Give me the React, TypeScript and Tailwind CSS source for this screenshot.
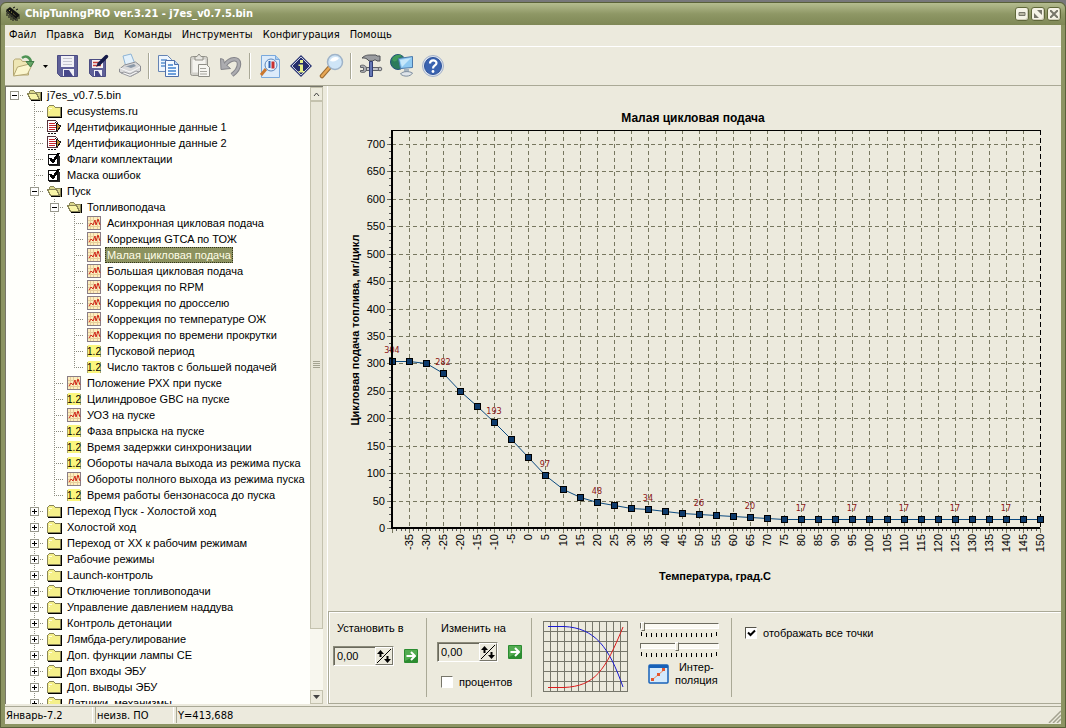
import React, { useState } from 'react';

type IconKind = 'open' | 'folder' | 'ident' | 'flags' | 'graph' | 'value';

interface TreeItem {
  label: string;
  level: number;
  icon: IconKind;
  box?: 'plus' | 'minus';
  last?: boolean;
}

const tree: TreeItem[] = [
  { label: 'j7es_v0.7.5.bin', level: 0, icon: 'open', box: 'minus' },
  { label: 'ecusystems.ru', level: 1, icon: 'folder' },
  { label: 'Идентификационные данные 1', level: 1, icon: 'ident' },
  { label: 'Идентификационные данные 2', level: 1, icon: 'ident' },
  { label: 'Флаги комплектации', level: 1, icon: 'flags' },
  { label: 'Маска ошибок', level: 1, icon: 'flags' },
  { label: 'Пуск', level: 1, icon: 'open', box: 'minus' },
  { label: 'Топливоподача', level: 2, icon: 'open', box: 'minus' },
  { label: 'Асинхронная цикловая подача', level: 3, icon: 'graph' },
  { label: 'Коррекция GTCA по ТОЖ', level: 3, icon: 'graph' },
  { label: 'Малая цикловая подача', level: 3, icon: 'graph' },
  { label: 'Большая цикловая подача', level: 3, icon: 'graph' },
  { label: 'Коррекция по RPM', level: 3, icon: 'graph' },
  { label: 'Коррекция по дросселю', level: 3, icon: 'graph' },
  { label: 'Коррекция по температуре ОЖ', level: 3, icon: 'graph' },
  { label: 'Коррекция по времени прокрутки', level: 3, icon: 'graph' },
  { label: 'Пусковой период', level: 3, icon: 'value' },
  { label: 'Число тактов с большей подачей', level: 3, icon: 'value', last: true },
  { label: 'Положение РХХ при пуске', level: 2, icon: 'graph' },
  { label: 'Цилиндровое GBC на пуске', level: 2, icon: 'value' },
  { label: 'УОЗ на пуске', level: 2, icon: 'graph' },
  { label: 'Фаза впрыска на пуске', level: 2, icon: 'value' },
  { label: 'Время задержки синхронизации', level: 2, icon: 'value' },
  { label: 'Обороты начала выхода из режима пуска', level: 2, icon: 'value' },
  { label: 'Обороты полного выхода из режима пуска', level: 2, icon: 'graph' },
  { label: 'Время работы бензонасоса до пуска', level: 2, icon: 'value', last: true },
  { label: 'Переход Пуск - Холостой ход', level: 1, icon: 'folder', box: 'plus' },
  { label: 'Холостой ход', level: 1, icon: 'folder', box: 'plus' },
  { label: 'Переход от ХХ к рабочим режимам', level: 1, icon: 'folder', box: 'plus' },
  { label: 'Рабочие режимы', level: 1, icon: 'folder', box: 'plus' },
  { label: 'Launch-контроль', level: 1, icon: 'folder', box: 'plus' },
  { label: 'Отключение топливоподачи', level: 1, icon: 'folder', box: 'plus' },
  { label: 'Управление давлением наддува', level: 1, icon: 'folder', box: 'plus' },
  { label: 'Контроль детонации', level: 1, icon: 'folder', box: 'plus' },
  { label: 'Лямбда-регулирование', level: 1, icon: 'folder', box: 'plus' },
  { label: 'Доп. функции лампы CE', level: 1, icon: 'folder', box: 'plus' },
  { label: 'Доп входы ЭБУ', level: 1, icon: 'folder', box: 'plus' },
  { label: 'Доп. выводы ЭБУ', level: 1, icon: 'folder', box: 'plus' },
  { label: 'Датчики, механизмы', level: 1, icon: 'folder', box: 'plus' },
];

const menu = ['Файл', 'Правка', 'Вид', 'Команды', 'Инструменты', 'Конфигурация', 'Помощь'];

// fuel per cycle, -40..150 °C with a step of 5
const fuel = [
  304, 304, 300, 282, 249, 222, 193, 162, 130, 97, 71, 56, 48, 42, 36, 34, 31, 28, 26, 23, 21, 20, 19,
  17, 17, 17, 17, 17, 17, 17, 17, 17, 17, 17, 17, 17, 17, 17, 17,
];

function TreeIcon({ kind }: { kind: IconKind }) {
  return (
    <svg width="20" height="16" viewBox="0 0 20 16" className="shrink-0" shapeRendering="crispEdges">
      {kind === 'folder' && (
        <>
          <path d="M4 14h13V4h1v11H4z" fill="#000" />
          <path d="M3.5 13.5v-9l2-2h4l2 2h5v9z" fill="#f5f08a" stroke="#8a8658" />
          <path d="M5 5h3M5 7h1" stroke="#fffde0" />
        </>
      )}
      {kind === 'open' && (
        <>
          <path d="M7 13h10V5h1v9H7z" fill="#000" />
          <path d="M5.500 12V4.500l1-1h3l2 2h5v8" fill="#d9d68c" stroke="#8a8658" />
          <path d="M3.500 6.500h9l3 6h-9z" fill="#f8f5a6" stroke="#8a8658" />
        </>
      )}
      {kind === 'ident' && (
        <>
          <path d="M3.500 1.500h8l2 2v9h-10z" fill="#fff" stroke="#55333a" />
          <path d="M5 4.500h6M5 6.500h7M5 8.500h7M5 10.500h6" stroke="#c3262b" />
          <path d="M4 14.500h9" stroke="#111" strokeDasharray="2 1" />
          <path d="M12 4l5 3-4 5z" fill="#b98a32" stroke="#111" />
        </>
      )}
      {kind === 'flags' && (
        <>
          <path d="M5 13h9V5h2v10H5z" fill="#222" />
          <path d="M4.500 3.500h9v10h-9z" fill="#fff" stroke="#111" />
          <path d="M6 7l3 4 6-9" fill="none" stroke="#000" strokeWidth="2.500" />
        </>
      )}
      {kind === 'graph' && (
        <>
          <rect x="3.500" y="1.500" width="13" height="13" rx="1" fill="#fdeec0" stroke="#8a7d84" />
          <path d="M6.500 2v12M9.500 2v12M13.500 2v12M4 5.500h12M4 8.500h12M4 11.500h12" stroke="#e6cd9a" />
          <path d="M5 11l2-3 2 2 2-5 1 5 2-6 2 6" fill="none" stroke="#d22a1c" shapeRendering="auto" />
        </>
      )}
      {kind === 'value' && (
        <>
          <rect x="4" y="2" width="12" height="12" fill="#fbf77d" />
          <path d="M3.500 3v11M16.500 3v11" stroke="#a8a56b" />
          <text x="10" y="12" textAnchor="middle" className="font-['Liberation_Sans',sans-serif] text-[10px]">
            1.2
          </text>
        </>
      )}
    </svg>
  );
}

function TreeRow({ item, selected, onSelect }: { item: TreeItem; selected: boolean; onSelect: () => void }) {
  const guides = Array.from({ length: item.level }, (_, i) => i);
  return (
    <li className="flex h-4 items-center whitespace-nowrap">
      {guides.map((g) => (
        <svg key={g} width="20" height="16" className="shrink-0">
          {g > 0 && <path d="M10.500 0v16" stroke="#8c8c80" strokeDasharray="1 1" />}
        </svg>
      ))}
      <svg width="20" height="16" className="shrink-0" shapeRendering="crispEdges">
        {item.level > 0 && (
          <path d={item.last ? 'M10.500 0v8' : 'M10.500 0v16'} stroke="#8c8c80" strokeDasharray="1 1" />
        )}
        <path d="M10 8.500h12" stroke="#8c8c80" strokeDasharray="1 1" />
        {item.box && (
          <>
            <rect x="6.500" y="4.500" width="8" height="8" fill="#fff" stroke="#98988c" />
            <path d={item.box === 'plus' ? 'M8 8.500h5M10.500 6v5' : 'M8 8.500h5'} stroke="#000" />
          </>
        )}
      </svg>
      <TreeIcon kind={item.icon} />
      <button
        onClick={onSelect}
        className={
          selected
            ? 'ml-px h-4 bg-[#8c925f] px-0.5 leading-4 text-[#fffee8] outline-1 -outline-offset-1 outline-dotted outline-[#33361c]'
            : 'ml-px h-4 px-0.5 leading-4'
        }
      >
        {item.label}
      </button>
    </li>
  );
}

function ToolButton({ label, children }: { label: string; children: React.ReactNode }) {
  return (
    <button aria-label={label} className="flex h-8 w-[31px] shrink-0 items-center justify-center">
      <svg width="26" height="26" viewBox="0 0 26 26">
        {children}
      </svg>
    </button>
  );
}

function Divider() {
  return <div className="mx-[3px] h-[26px] w-[2px] shrink-0 border-l border-r border-l-[#a9a896] border-r-white" />;
}

function Toolbar() {
  return (
    <div className="flex h-10 shrink-0 items-center border-t border-b border-t-white border-b-[#aaa996] pl-0.5">
      <button aria-label="Открыть" className="flex h-8 w-[31px] items-center justify-center">
        <svg width="26" height="26" viewBox="0 0 26 26">
          <path d="M3.500 22V7.500l2-1.500h5l2 2.500h6V22z" fill="#eee6b4" stroke="#b5a873" />
          <path d="M3.500 23l4-9 12-3h3l-5 10z" fill="#fbf6cf" stroke="#b5a873" />
          <path d="M12 5c4-3 8-1 9 4" fill="none" stroke="#4f9455" strokeWidth="2.500" />
          <path d="M16 8.500h8L20.500 14z" fill="#65a566" stroke="#3f7b48" />
        </svg>
      </button>
      <button aria-label="Последние файлы" className="flex h-8 w-3.5 items-center justify-center">
        <svg width="5" height="3">
          <path d="M0 0h5L2.500 3z" fill="#000" />
        </svg>
      </button>
      <ToolButton label="Сохранить">
        <path d="M2.500 2.500h20v21H5.500l-3-3z" fill="#5f6098" stroke="#4b4c82" />
        <path d="M6 3h13v11H6z" fill="#f1f1f6" />
        <path d="M8 5.500h9M8 8.500h9M8 11.500h9" stroke="#c3c4cf" />
        <path d="M8 16h11v7H8z" fill="#f1f1f6" />
        <path d="M9 17h5l4 6H9z" fill="#46478a" />
      </ToolButton>
      <ToolButton label="Сохранить как">
        <path d="M3.500 6.500h16v17h-13l-3-3z" fill="#5f6098" stroke="#4b4c82" />
        <path d="M6 7h11v8H6z" fill="#f5f4f4" />
        <path d="M7 9.500h6M7 12.500h8" stroke="#c9403a" strokeWidth="1.500" />
        <path d="M8 17h8v6H8z" fill="#f1f1f6" />
        <path d="M9 18h3l3 5H9z" fill="#46478a" />
        <path d="M20.500 3.500L13 11" stroke="#151a48" strokeWidth="3.500" strokeLinecap="round" />
        <path d="M12 10l-2 4 4-2z" fill="#151a48" />
      </ToolButton>
      <ToolButton label="Печать">
        <path d="M6 3l8-2 4 10-9 3z" fill="#e3f1fb" stroke="#8db4d6" />
        <path d="M2.500 16l5-4 11-3 5 4v5l-9 5-12-4z" fill="#dadadb" stroke="#8c8d92" />
        <path d="M3 15l10 4 10-5" fill="none" stroke="#f8f8f8" />
        <path d="M8 13l6 2 5-2-2-2-7 2z" fill="#8a98a8" />
        <path d="M4 20l9 3.500 9-4.500-3-1-6 3-6-2z" fill="#f4f4f4" stroke="#9b9ca0" />
      </ToolButton>
      <Divider />
      <ToolButton label="Копировать">
        <path d="M2.500 2.500h9l4 4v12h-13z" fill="#eef5fd" stroke="#6584b4" />
        <path d="M5 7h6M5 10h8M5 13h8" stroke="#5b91d0" strokeWidth="1.500" />
        <path d="M9.500 7.500h9l4 4v12h-13z" fill="#f5faff" stroke="#4f6fa8" />
        <path d="M18.500 7.500v4h4" fill="#b8d2ee" stroke="#4f6fa8" />
        <path d="M12 12h5M12 15h8M12 18h8M12 21h8" stroke="#4283cf" strokeWidth="1.500" />
      </ToolButton>
      <ToolButton label="Вставить">
        <rect x="3.500" y="3.500" width="17" height="19" rx="2" fill="#d1d0c9" stroke="#96958d" />
        <path d="M5.500 6.500h13v13h-13z" fill="#f4f3ee" />
        <path d="M8 7V3.500h2L12 1l2 2.500h2V7z" fill="#e6e5df" stroke="#8f8e86" />
        <path d="M11.500 11.500h8l3 3v9h-11z" fill="#f7f6f1" stroke="#8f8e86" />
        <path d="M13 15.500h6M13 18.500h7M13 21h7" stroke="#a5a49d" />
      </ToolButton>
      <ToolButton label="Отменить">
        <path d="M7 12c5-7 14-8 14-1 0 5-3 8-7 11" fill="none" stroke="#85858a" strokeWidth="4.500" />
        <path d="M2.500 5.500l3 1 1 4 6 5-9.500 1z" fill="#acacb0" stroke="#85858a" />
        <path d="M7 12c5-7 14-8 14-1 0 5-3 8-7 11" fill="none" stroke="#acacb0" strokeWidth="2.500" />
      </ToolButton>
      <Divider />
      <ToolButton label="Просмотр">
        <path d="M4.500 2.500h14l4 4v18h-18z" fill="#dcebfa" stroke="#7aa9dc" />
        <path d="M18.500 2.500v4h4" fill="#a9cbee" stroke="#7aa9dc" />
        <path d="M4 22l5-6" stroke="#c9772f" strokeWidth="3" />
        <circle cx="14" cy="12" r="6" fill="#e4f1fc" stroke="#5a86bd" />
        <path d="M12.500 8v7" stroke="#3164b4" strokeWidth="2" />
        <path d="M16 8.500v7" stroke="#c93030" strokeWidth="3" />
      </ToolButton>
      <ToolButton label="Информация">
        <path d="M13 2l11 11-11 11L2 13z" fill="#2b3674" />
        <path d="M13 4l9 9-9 9-9-9z" fill="#262f6c" stroke="#c9cde0" />
        <path d="M12 7h3v3h-3zM10.500 11.500H15V18h1.500v1.500h-6V18H12v-5h-1.500z" fill="#e6f08a" />
      </ToolButton>
      <ToolButton label="Найти">
        <path d="M3 23l7-8" stroke="#9a6a31" strokeWidth="4.500" strokeLinecap="round" />
        <path d="M3 23l7-8" stroke="#e7a755" strokeWidth="2.500" strokeLinecap="round" />
        <circle cx="16" cy="9" r="7.500" fill="#cfe5f7" stroke="#9fb3c8" strokeWidth="1.500" />
        <path d="M11 8c1-4 6-5 9-3-2 3-5 4-9 3z" fill="#fff" />
      </ToolButton>
      <Divider />
      <ToolButton label="Настройки">
        <path d="M4 5c3-3 6-3 8-3h6l1 1h3v5h-3l-1-1h-2l-1 1h-4l-2-2c-2-1-3-1-5-1z" fill="#9a9ca0" stroke="#505256" />
        <path d="M8 14.500h13v3H8z" fill="#c4c6ca" stroke="#606266" />
        <path d="M2.500 12.500c3-1 6 0 6 3.500s-3 4-6 3v-1.500h3v-3h-3z" fill="#a9abb0" stroke="#606266" />
        <circle cx="22" cy="16" r="1.800" fill="#c4c6ca" stroke="#606266" />
        <path d="M11.500 8.500h3v15h-3z" fill="#6577b4" stroke="#333f75" />
      </ToolButton>
      <ToolButton label="Подключение">
        <circle cx="9" cy="9" r="7.500" fill="#2b7a5b" stroke="#23517d" />
        <path d="M3 6c3-5 8-5 10-3-4 1-4 4-6 5s-3 0-4-2z" fill="#3f9a5c" />
        <path d="M9.500 5.500l14-2v11l-12 1z" fill="#8fcaf2" stroke="#4c7aac" />
        <path d="M11 7l11-2-9 9z" fill="#c6e8fb" />
        <path d="M15 16h5v4h-5z" fill="#a7b4c0" />
        <path d="M11.500 21c2-3 9-3 12-1-2 4-9 4-12 1z" fill="#e0e5ea" stroke="#7c8c9c" />
      </ToolButton>
      <ToolButton label="Справка">
        <circle cx="13" cy="13" r="10.500" fill="#dce3ee" stroke="#a3b1c9" />
        <circle cx="13" cy="13" r="8.500" fill="#3a63b0" stroke="#2d5299" />
        <path d="M10 10.500c0-4 6.500-4 6.500-.5 0 2.500-3.500 2.500-3.500 5.500" fill="none" stroke="#fff" strokeWidth="2.200" />
        <circle cx="13" cy="18.500" r="1.400" fill="#fff" />
      </ToolButton>
    </div>
  );
}

function FuelChart() {
  // plot box inside the 733x525 drawing
  const left = 64;
  const right = 712;
  const top = 44;
  const bottom = 442;
  const px = (i: number) => Math.round(left + (i * (right - left)) / 38);
  const py = (v: number) => Math.round(bottom - (v * 384) / 700);
  const levels = Array.from({ length: 15 }, (_, i) => i * 50);

  return (
    <svg
      viewBox="0 0 733 525"
      preserveAspectRatio="xMinYMin meet"
      role="img"
      aria-label="Малая цикловая подача"
      className="h-full w-full font-['Liberation_Sans',sans-serif] text-[11px]"
    >
      <text x="365" y="36" textAnchor="middle" className="text-[12px] font-bold">
        Малая цикловая подача
      </text>
      <g stroke="#77775f" strokeDasharray="4 3" shapeRendering="crispEdges">
        {levels.slice(1).map((v) => (
          <path key={v} d={`M${left} ${py(v) + 0.5}H${right}`} />
        ))}
        {fuel.slice(1, -1).map((_, i) => (
          <path key={i} d={`M${px(i + 1) + 0.5} ${top}V${bottom}`} />
        ))}
      </g>
      <g shapeRendering="crispEdges">
        {levels.map((v) => (
          <path key={v} d={`M59 ${py(v) + 0.5}h5`} stroke="#77775f" />
        ))}
        {Array.from({ length: 58 }, (_, i) => (
          <path key={i} d={`M61 ${Math.round(bottom - (i * 384) / 56) + 0.5}h2`} stroke="#555" />
        ))}
        {Array.from({ length: 153 }, (_, i) => (
          <path key={i} d={`M${Math.round(left + (i * 648) / 152) + 0.5} ${bottom}v3`} stroke="#555" />
        ))}
        {fuel.map((_, i) => (
          <path key={i} d={`M${px(i) + 0.5} ${bottom}v5`} stroke="#77775f" />
        ))}
        <path d={`M${right + 0.5} ${top}V${bottom}`} stroke="#000" strokeDasharray="5 3" />
      </g>
      {levels.map((v) => (
        <text key={v} x="57" y={py(v) + 4} textAnchor="end">
          {v}
        </text>
      ))}
      {fuel.map(
        (_, i) =>
          i > 0 && (
            <text key={i} transform={`translate(${px(i) + 4} 448) rotate(-90)`} textAnchor="end">
              {i * 5 - 40}
            </text>
          )
      )}
      <polyline points={fuel.map((v, i) => `${px(i) + 0.5},${py(v) + 0.5}`).join(' ')} fill="none" stroke="#0b4a80" />
      {fuel.map((v, i) => (
        <rect
          key={i}
          x={px(i) - 2.5}
          y={py(v) - 2.5}
          width="6"
          height="6"
          fill="#0d3a6b"
          stroke="#000"
          shapeRendering="crispEdges"
        />
      ))}
      {fuel.map(
        (v, i) =>
          i % 3 === 0 && (
            <text
              key={i}
              x={px(i)}
              y={py(v) - 8}
              textAnchor="middle"
              fill="#8b1414"
              className="font-['DejaVu_Sans_Condensed',sans-serif] text-[9px]"
            >
              {v}
            </text>
          )
      )}
      <path d={`M${left} ${top}V${bottom}H${right}`} fill="none" stroke="#000" strokeWidth="2" shapeRendering="crispEdges" />
      <path d={`M${left} ${top + 0.5}H${right}`} stroke="#000" shapeRendering="crispEdges" />
      <text transform="translate(31 244) rotate(-90)" textAnchor="middle" className="font-bold">
        Цикловая подача топлива, мг/цикл
      </text>
      <text x="387" y="494" textAnchor="middle" className="font-bold">
        Температура, град.С
      </text>
    </svg>
  );
}

function SpinField({ id }: { id: string }) {
  const [value, setValue] = useState('0,00');
  return (
    <div className="flex items-center gap-2.5">
      <div className="flex h-5 w-[61px] border border-t-[#8b8a7a] border-r-white border-b-white border-l-[#8b8a7a]">
        <input
          id={id}
          value={value}
          onChange={(e) => setValue(e.target.value)}
          className="w-[41px] border-t border-l border-[#6a695c] bg-[#eceadd] pl-0.5 outline-none"
        />
        <button
          aria-label="Больше или меньше"
          className="flex-1 border border-t-white border-r-[#77766a] border-b-[#77766a] border-l-white"
        >
          <svg width="16" height="16" viewBox="0 0 16 16">
            <path d="M15 1L1 15" stroke="#000" />
            <path d="M1 6l3.500-4L8 6H5.500v3h-2V6zM8 11l3.500 4L15 11h-2.500V8h-2v3z" fill="#000" />
          </svg>
        </button>
      </div>
      <button aria-label="Применить">
        <svg width="14" height="14" viewBox="0 0 14 14">
          <rect width="14" height="14" rx="1" fill="#2b8c30" />
          <path d="M1 1h12v5L1 12z" fill="#52ab50" />
          <path d="M2.500 7h8M7 3l4 4-4 4" fill="none" stroke="#fff" strokeWidth="2" />
        </svg>
      </button>
    </div>
  );
}

function Slider({ label, start }: { label: string; start: number }) {
  const [value, setValue] = useState(start);
  return (
    <div className="flex flex-col gap-px">
      <input
        type="range"
        aria-label={label}
        min="0"
        max="15"
        value={value}
        onChange={(e) => setValue(Number(e.target.value))}
        className="h-[9px] w-[79px] appearance-none bg-transparent [&::-webkit-slider-runnable-track]:h-[6px] [&::-webkit-slider-runnable-track]:border [&::-webkit-slider-runnable-track]:border-t-[#6d6c60] [&::-webkit-slider-runnable-track]:border-r-white [&::-webkit-slider-runnable-track]:border-b-white [&::-webkit-slider-runnable-track]:border-l-[#6d6c60] [&::-webkit-slider-runnable-track]:bg-[#fbfaf3] [&::-webkit-slider-thumb]:-mt-[2px] [&::-webkit-slider-thumb]:h-[9px] [&::-webkit-slider-thumb]:w-[4px] [&::-webkit-slider-thumb]:appearance-none [&::-webkit-slider-thumb]:border [&::-webkit-slider-thumb]:border-t-white [&::-webkit-slider-thumb]:border-r-[#6d6c60] [&::-webkit-slider-thumb]:border-b-[#6d6c60] [&::-webkit-slider-thumb]:border-l-white [&::-webkit-slider-thumb]:bg-[#eceadd]"
      />
      <svg width="79" height="6" shapeRendering="crispEdges">
        {Array.from({ length: 16 }, (_, i) => (
          <path key={i} d={`M${i * 5 + 1.5} ${i % 15 === 0 ? 1 : 2}v4`} stroke="#000" />
        ))}
      </svg>
    </div>
  );
}

function ControlPanel() {
  const [percent, setPercent] = useState(false);
  const [allPoints, setAllPoints] = useState(true);
  const cols = Array.from({ length: 13 }, (_, i) => i * 7 + 0.5);
  const rows = Array.from({ length: 8 }, (_, i) => i * 10 + 0.5);

  return (
    <div className="flex h-[93px] shrink-0 items-stretch border-t border-b border-l border-[#aaa996] py-1.5 pl-1 font-['Liberation_Sans',sans-serif] text-[11px] shadow-[inset_1px_1px_0_#fff]">
      <div className="flex w-[94px] flex-col items-start border-r border-[#aaa996]">
        <label htmlFor="set-to" className="mt-0.5 mb-2.5 pl-1 leading-4">
          Установить в
        </label>
        <SpinField id="set-to" />
      </div>
      <div className="flex w-[105px] flex-col items-start border-r border-[#aaa996] pl-2.5">
        <label htmlFor="change-by" className="mt-0.5 mb-1.5 pl-1 leading-4">
          Изменить на
        </label>
        <SpinField id="change-by" />
        <label className="mt-3 ml-1 flex items-center gap-1.5">
          <input
            type="checkbox"
            checked={percent}
            onChange={(e) => setPercent(e.target.checked)}
            className="h-3 w-3 appearance-none border border-t-[#77766a] border-r-white border-b-white border-l-[#77766a] bg-white checked:bg-[#77766a]"
          />
          процентов
        </label>
      </div>
      <div className="flex w-[200px] gap-3 border-r border-[#aaa996] pt-[3px] pl-[11px]">
        <svg width="85" height="71" viewBox="0 0 85 71" className="shrink-0">
          <g stroke="#77776b" shapeRendering="crispEdges">
            {cols.map((x) => (
              <path key={x} d={`M${x} 0v71`} />
            ))}
            {rows.map((y) => (
              <path key={y} d={`M0 ${y}h85`} />
            ))}
          </g>
          <path d="M5 5.500h16C52 7 66 26 80 66" fill="none" stroke="#1a1ad0" />
          <path d="M5 66.500h16C52 65 62 50 80 6" fill="none" stroke="#dc1c1c" />
        </svg>
        <div className="flex flex-col gap-1">
          <Slider label="Верхняя граница" start={0} />
          <Slider label="Нижняя граница" start={7} />
          <button className="ml-2 flex items-center gap-1.5 text-center leading-[13px]">
            <svg width="21" height="20" viewBox="0 0 21 20" className="shrink-0">
              <rect x="1" y="1" width="19" height="18" rx="1" fill="#d4eafc" stroke="#1761b8" strokeWidth="1.500" />
              <path d="M1 1h19v3H1z" fill="#1761b8" />
              <path d="M4 16L17 5" stroke="#ef8a5d" />
              <path d="M3 14h3v3H3zM9 9h3v3H9zM14 4h3v3h-3z" fill="#e5562c" />
            </svg>
            <span>
              Интер-
              <br />
              поляция
            </span>
          </button>
        </div>
      </div>
      <label className="flex items-center gap-1.5 self-start pt-[7px] pl-[13px]">
        <span className="relative flex h-3 w-3">
          <input
            type="checkbox"
            checked={allPoints}
            onChange={(e) => setAllPoints(e.target.checked)}
            className="peer h-3 w-3 appearance-none border border-t-[#55544a] border-r-white border-b-white border-l-[#55544a] bg-white"
          />
          <svg width="12" height="12" className="pointer-events-none absolute top-0 left-0 hidden peer-checked:block">
            <path d="M3 5.500l2.500 2.500L10 3.500" fill="none" stroke="#000" strokeWidth="2" />
          </svg>
        </span>
        отображать все точки
      </label>
    </div>
  );
}

const captionButton =
  'flex h-3.5 w-3.5 items-center justify-center rounded-[3px] border border-[#5f6739] bg-[#f5f3e6] shadow-[inset_-1px_-1px_0_#cfcdb8]';
const scrollButton =
  'flex h-3.5 w-full shrink-0 items-center justify-center border border-[#c4c2ae] bg-[#edebdd]';

export default function App() {
  const [selected, setSelected] = useState(10);

  return (
    <div className="flex h-screen flex-col overflow-hidden bg-[#77777a] pt-0.5 font-['DejaVu_Sans_Condensed','DejaVu_Sans',sans-serif] text-[11px] text-black">
      <div className="flex min-h-0 flex-1 flex-col rounded-t-md border border-[#596038] bg-[#8c9463] px-1 pb-[3px]">
        <header className="-mx-1 flex h-[22px] shrink-0 items-center rounded-t-md bg-linear-to-b from-[#b5bd90] via-[#8e9765] to-[#7f8856] px-1 text-white">
          <svg width="16" height="16" viewBox="0 0 16 16" className="mr-1">
            <path d="M1 4l4-3 10 8-4 4z" fill="#111" />
            <path d="M1 4l10 9v2L1 6z" fill="#2c2c25" />
            <path d="M2 7v3M4 9v3M6 10v4M8 12v3M14 10v3M12 12v3M8 2l2-1M11 4l2-1" stroke="#111" />
            <path d="M4 4l7 6" stroke="#d8d05c" strokeDasharray="1 2" />
          </svg>
          <h1 className="flex-1 text-[11px] font-bold">ChipTuningPRO ver.3.21 - j7es_v0.7.5.bin</h1>
          <div className="flex gap-0.5">
            <button aria-label="Свернуть" className={captionButton}>
              <svg width="8" height="8">
                <path d="M1 2.500h6v3H1z" fill="#b9b7a4" stroke="#77766a" />
              </svg>
            </button>
            <button aria-label="Развернуть" className={captionButton}>
              <svg width="8" height="8">
                <path d="M3 0h5v5zM0 3v5h5z" fill="#77766a" />
              </svg>
            </button>
            <button aria-label="Закрыть" className={captionButton}>
              <svg width="8" height="8">
                <path d="M0 0l8 8M8 0L0 8" stroke="#77766a" strokeWidth="2" />
              </svg>
            </button>
          </div>
        </header>

        <div className="flex min-h-0 flex-1 flex-col bg-[#eceadd]">
          <nav className="flex h-[21px] shrink-0 items-center gap-2.5 pb-px pl-1">
            {menu.map((m) => (
              <button key={m}>{m}</button>
            ))}
          </nav>
          <Toolbar />

          <main className="flex min-h-0 flex-1">
            <aside className="flex w-[318px] shrink-0 border-t border-l border-[#77766a] bg-[#fffffb] font-['Liberation_Sans',sans-serif]">
              <ul className="-ml-0.5 min-w-0 flex-1 overflow-hidden">
                {tree.map((item, i) => (
                  <TreeRow key={i} item={item} selected={i === selected} onSelect={() => setSelected(i)} />
                ))}
              </ul>
              <div className="flex w-[13px] shrink-0 flex-col bg-[#f8f7ef]">
                <button aria-label="Вверх" className={scrollButton}>
                  <svg width="7" height="4">
                    <path d="M1 4l2.500-3L6 4" fill="none" stroke="#444" />
                  </svg>
                </button>
                <div className="flex flex-[530] items-center justify-center border border-[#c4c2ae] bg-[#e8e6d8]">
                  <svg width="7" height="8" shapeRendering="crispEdges">
                    <path d="M0 .5h7M0 2.500h7M0 4.500h7M0 6.500h7" stroke="#a4a391" />
                  </svg>
                </div>
                <div className="flex-[62]" />
                <button aria-label="Вниз" className={scrollButton}>
                  <svg width="7" height="4">
                    <path d="M0 0h7L3.500 4z" fill="#444" />
                  </svg>
                </button>
              </div>
            </aside>
            <section className="ml-1 flex min-w-0 flex-1 flex-col border-l border-white">
              <div className="min-h-0 flex-1">
                <FuelChart />
              </div>
              <ControlPanel />
            </section>
          </main>

          <footer className="mt-0.5 flex h-[18px] shrink-0 items-stretch gap-0.5 border-t border-[#aaa996] pb-px leading-[18px]">
            <span className="w-[88px] border-r border-white pl-px">Январь-7.2</span>
            <span className="w-[79px] border-r border-l border-r-white border-l-[#aaa996] pl-px">неизв. ПО</span>
            <span className="flex-1 border-l border-[#aaa996] pl-px">Y=413,688</span>
            <svg width="13" height="16" className="shrink-0">
              <path d="M1 16L13 4M5 16l8-8M9 16l4-4" stroke="#a3a28f" strokeWidth="1.500" />
            </svg>
          </footer>
        </div>
      </div>
    </div>
  );
}
